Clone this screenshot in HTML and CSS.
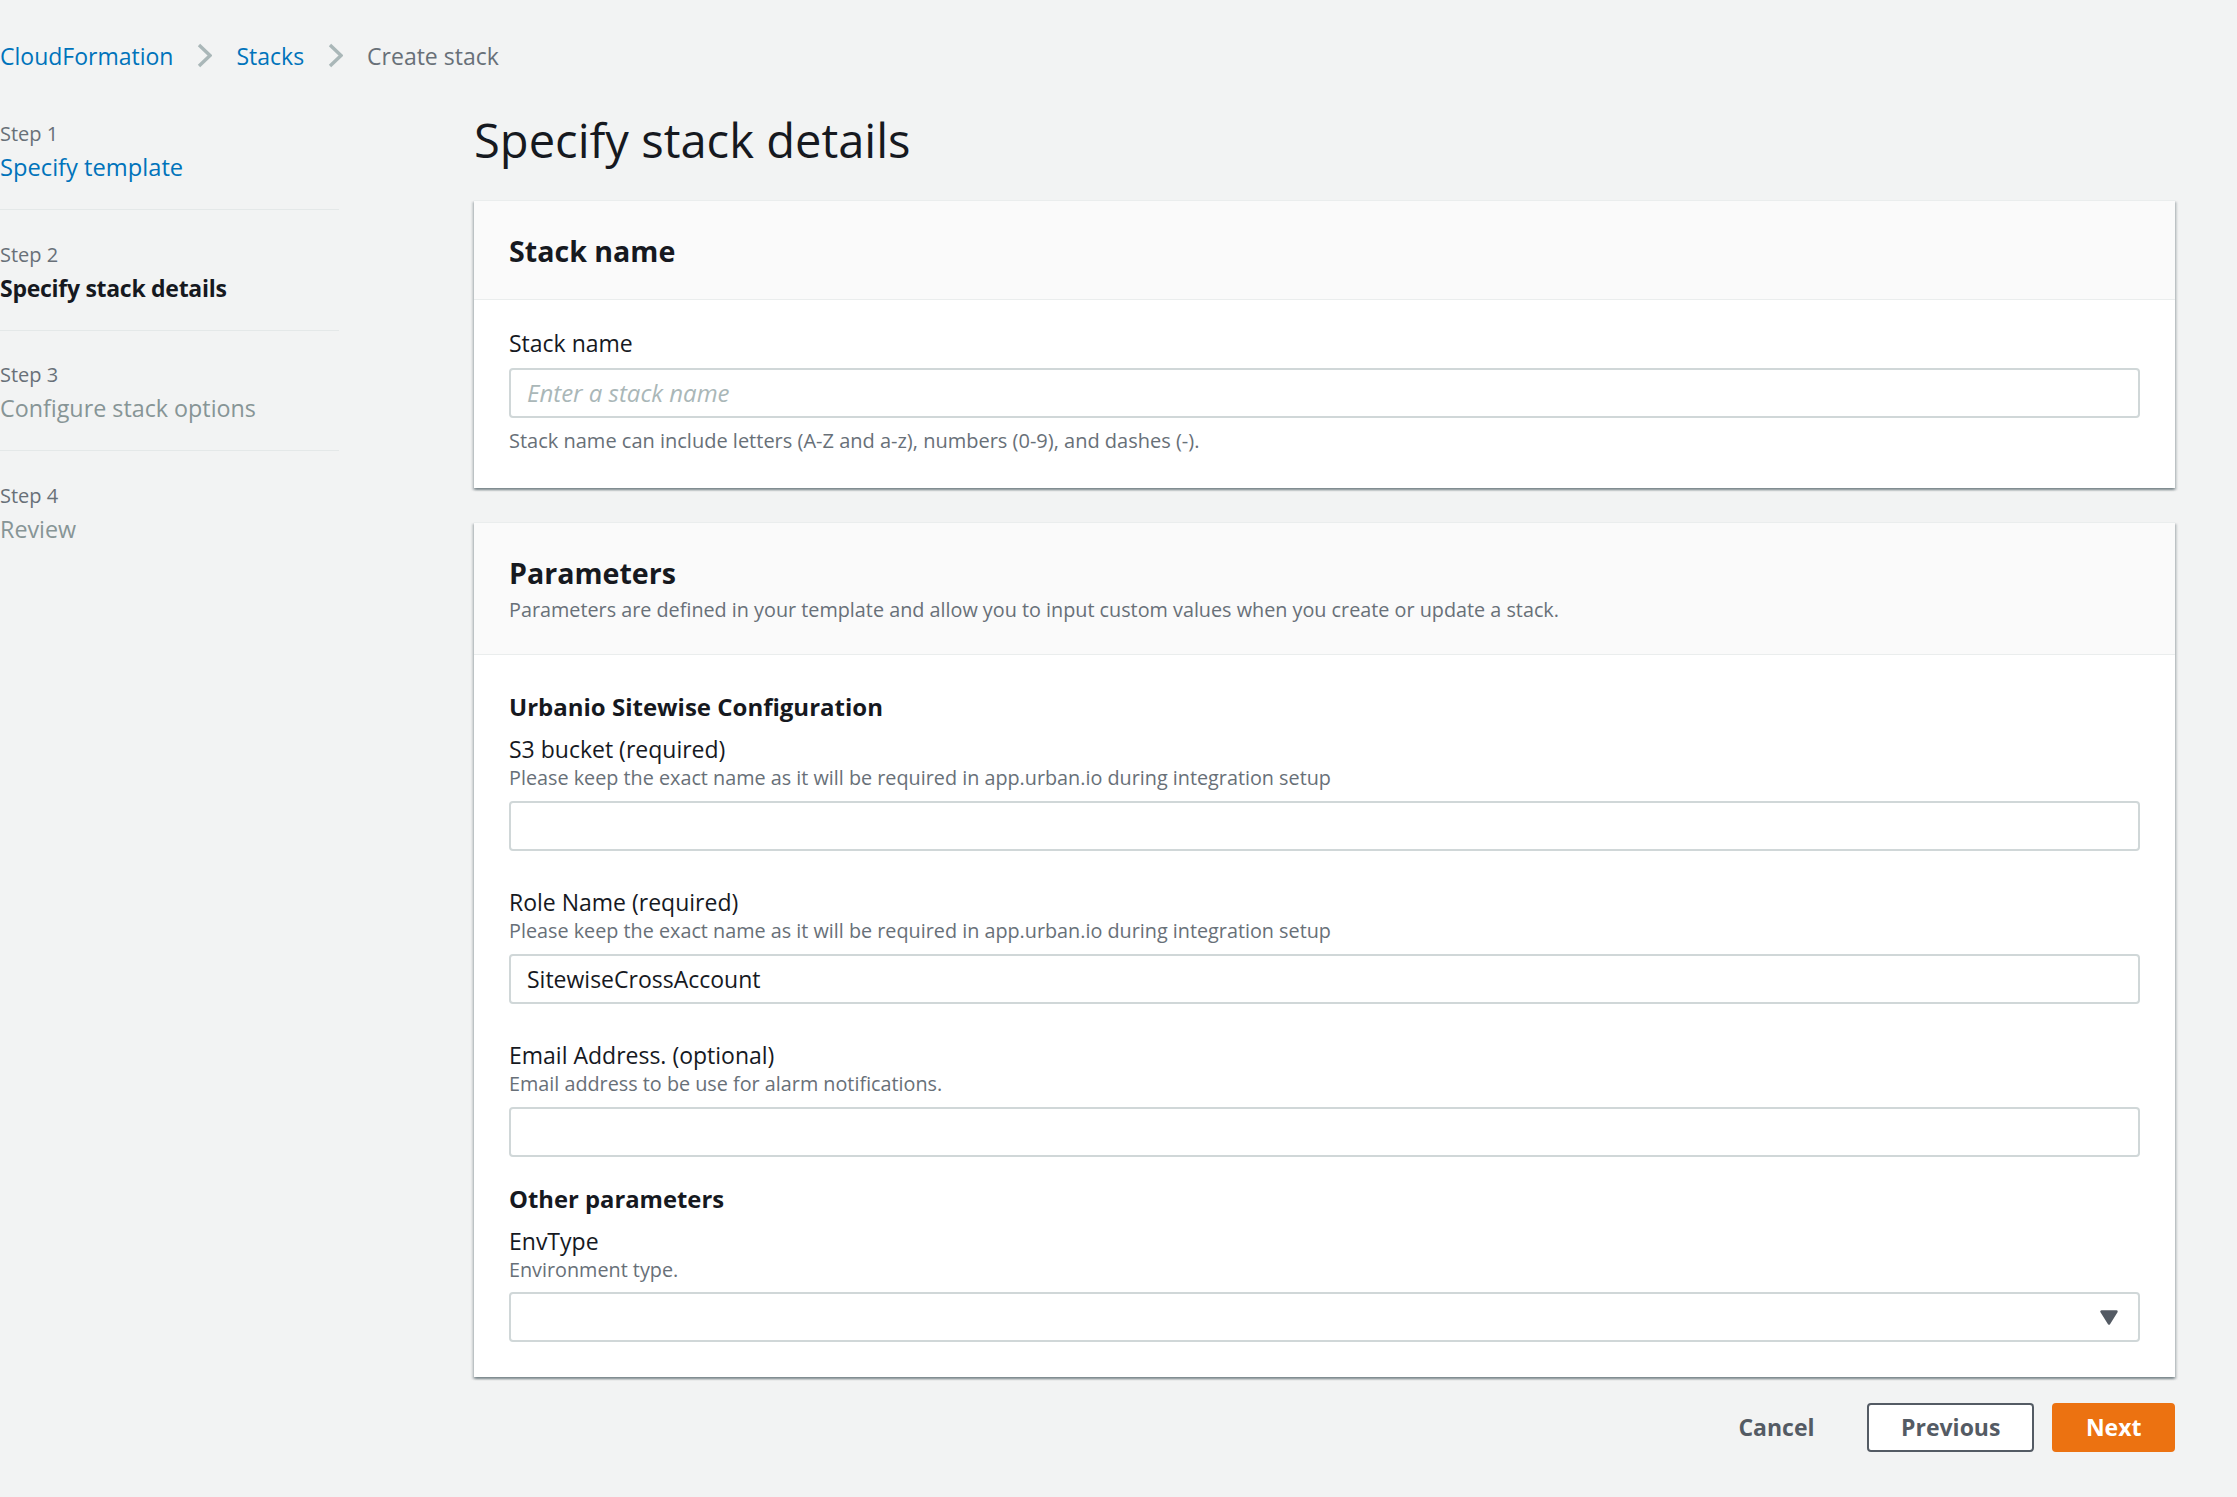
FILE: index.html
```html
<!DOCTYPE html>
<html lang="en">
<head>
<meta charset="utf-8">
<title>Create stack</title>
<link rel="stylesheet" href="styles.css">
</head>
<body>
<nav class="breadcrumbs">
  <a class="crumb-link" href="#">CloudFormation</a>
  <svg class="chev" width="15" height="25" viewBox="0 0 15 25"><polyline points="2,2 13,12.5 2,23" fill="none" stroke="#aab7b8" stroke-width="3.4"/></svg>
  <a class="crumb-link" href="#">Stacks</a>
  <svg class="chev" width="15" height="25" viewBox="0 0 15 25"><polyline points="2,2 13,12.5 2,23" fill="none" stroke="#aab7b8" stroke-width="3.4"/></svg>
  <span class="crumb-current">Create stack</span>
</nav>
<div class="layout">
  <ul class="steps">
    <li class="step">
      <div class="step-label">Step 1</div>
      <div class="step-title link">Specify template</div>
    </li>
    <li class="step">
      <div class="step-label">Step 2</div>
      <div class="step-title active">Specify stack details</div>
    </li>
    <li class="step">
      <div class="step-label">Step 3</div>
      <div class="step-title disabled">Configure stack options</div>
    </li>
    <li class="step">
      <div class="step-label">Step 4</div>
      <div class="step-title disabled">Review</div>
    </li>
  </ul>
  <main class="main">
    <h1 class="page-title">Specify stack details</h1>

    <section class="card">
      <div class="card-header">
        <h2 class="card-title">Stack name</h2>
      </div>
      <div class="card-body card-body-name">
        <div class="field-label">Stack name</div>
        <input class="input input-name" type="text" placeholder="Enter a stack name">
        <div class="constraint">Stack name can include letters (A-Z and a-z), numbers (0-9), and dashes (-).</div>
      </div>
    </section>

    <section class="card">
      <div class="card-header">
        <h2 class="card-title">Parameters</h2>
        <div class="card-desc">Parameters are defined in your template and allow you to input custom values when you create or update a stack.</div>
      </div>
      <div class="card-body card-body-params">
        <h3 class="group-title">Urbanio Sitewise Configuration</h3>
        <div class="field field-first">
          <div class="field-label">S3 bucket (required)</div>
          <div class="field-desc">Please keep the exact name as it will be required in app.urban.io during integration setup</div>
          <input class="input" type="text">
        </div>
        <div class="field">
          <div class="field-label">Role Name (required)</div>
          <div class="field-desc">Please keep the exact name as it will be required in app.urban.io during integration setup</div>
          <input class="input" type="text" value="SitewiseCrossAccount">
        </div>
        <div class="field">
          <div class="field-label">Email Address. (optional)</div>
          <div class="field-desc">Email address to be use for alarm notifications.</div>
          <input class="input" type="text">
        </div>
        <h3 class="group-title group-title-next">Other parameters</h3>
        <div class="field field-first">
          <div class="field-label">EnvType</div>
          <div class="field-desc">Environment type.</div>
          <div class="select" role="combobox">
            <svg class="caret" width="18" height="15" viewBox="0 0 18 15"><path d="M1.5 1.5 H16.5 L9 13.5 Z" fill="#545b64" stroke="#545b64" stroke-width="2.4" stroke-linejoin="round"/></svg>
          </div>
        </div>
      </div>
    </section>

    <div class="actions">
      <button class="btn btn-link" type="button">Cancel</button>
      <button class="btn btn-normal" type="button">Previous</button>
      <button class="btn btn-primary" type="button">Next</button>
    </div>
  </main>
</div>
</body>
</html>
```
FILE: styles.css
```css
* { box-sizing: border-box; }

body {
  margin: 0;
  background: #f2f3f3;
  font-family: "Open Sans", "Noto Sans", sans-serif;
  color: #16191f;
}

.breadcrumbs {
  display: flex;
  align-items: center;
  gap: 24px;
  padding-top: 39.5px;
  font-size: 23px;
  line-height: 32px;
}

.crumb-link { color: #0073bb; text-decoration: none; }
.crumb-current { color: #687078; }
.chev { display: block; }

.layout {
  display: grid;
  grid-template-columns: 339px 1fr;
  column-gap: 135px;
  padding-right: 62px;
  margin-top: 18px;
}

.steps { list-style: none; margin: 0; padding: 0; }

.step {
  padding: 29.5px 0 24px;
  border-bottom: 1px solid #e4e8e8;
}
.step:last-child { border-bottom: none; }

.step-label {
  font-size: 20px;
  line-height: 30px;
  color: #687078;
}

.step-title {
  font-size: 23.3px;
  line-height: 36px;
}
.step-title.link { color: #0073bb; font-size: 23.7px; }
.step-title.active { font-weight: 700; color: #16191f; font-size: 23px; letter-spacing: -0.28px; }
.step-title.disabled { color: #879596; }

.main { min-width: 0; }

.page-title {
  margin: 22.5px 0 32px;
  font-size: 47.1px;
  line-height: 56px;
  font-weight: 400;
  color: #16191f;
}

.card {
  background: #fff;
  border-top: 1px solid #eaeded;
  box-shadow: 0 2px 2px 0 rgba(0, 28, 36, 0.3), 2px 2px 2px 0 rgba(0, 28, 36, 0.15), -2px 2px 2px 0 rgba(0, 28, 36, 0.15);
}
.card + .card { margin-top: 34px; }

.card-header {
  background: #fafafa;
  border-bottom: 1px solid #eaeded;
  padding: 30px 35px 28px;
}

.card-title {
  margin: 0;
  font-size: 28.6px;
  line-height: 40px;
  font-weight: 700;
}

.card-desc {
  margin: 3px 0 2px;
  font-size: 19.8px;
  line-height: 28px;
  color: #687078;
}

.card-body-name { padding: 28px 35px 33px; }
.card-body-params { padding: 36px 35px 34.5px; }

.field-label {
  font-size: 23px;
  line-height: 30px;
  color: #16191f;
}

.field-desc {
  margin-top: 1px;
  font-size: 19.8px;
  line-height: 26px;
  color: #687078;
}

.constraint {
  margin-top: 9px;
  font-size: 20px;
  line-height: 28px;
  color: #687078;
}

.input, .select {
  display: block;
  width: 100%;
  height: 50px;
  margin-top: 9.5px;
  border: 2px solid #d0d7d8;
  border-radius: 4px;
  background: #fff;
  padding: 0 16px;
  font-family: "Open Sans", "Noto Sans", sans-serif;
  font-size: 23px;
  color: #16191f;
  outline: none;
}
.input-name { margin-top: 10px; }
.input::placeholder { color: #aab7b8; font-style: italic; font-size: 24px; opacity: 1; }

.select {
  display: flex;
  align-items: center;
  justify-content: flex-end;
  padding-right: 20px;
}
.caret { display: block; }

.group-title {
  margin: 0;
  font-size: 24px;
  line-height: 32px;
  font-weight: 700;
}
.group-title-next { margin-top: 26px; font-size: 23.8px; }

.field { margin-top: 36.5px; }
.field-first { margin-top: 11px; }
.group-title-next + .field-first { margin-top: 11px; }

.actions {
  display: flex;
  justify-content: flex-end;
  gap: 18px;
  margin-top: 26px;
}

.btn {
  height: 49px;
  padding: 0 32.5px;
  border: 2px solid transparent;
  border-radius: 4px;
  font-family: "Open Sans", "Noto Sans", sans-serif;
  font-size: 23px;
  line-height: 32px;
  font-weight: 700;
  background: transparent;
  color: #545b64;
  cursor: pointer;
}
.btn-normal { background: #fff; border-color: #545b64; padding: 0 32px; }
.btn-primary { background: #ec7211; border-color: #ec7211; color: #fff; padding: 0 31.5px; }
```
